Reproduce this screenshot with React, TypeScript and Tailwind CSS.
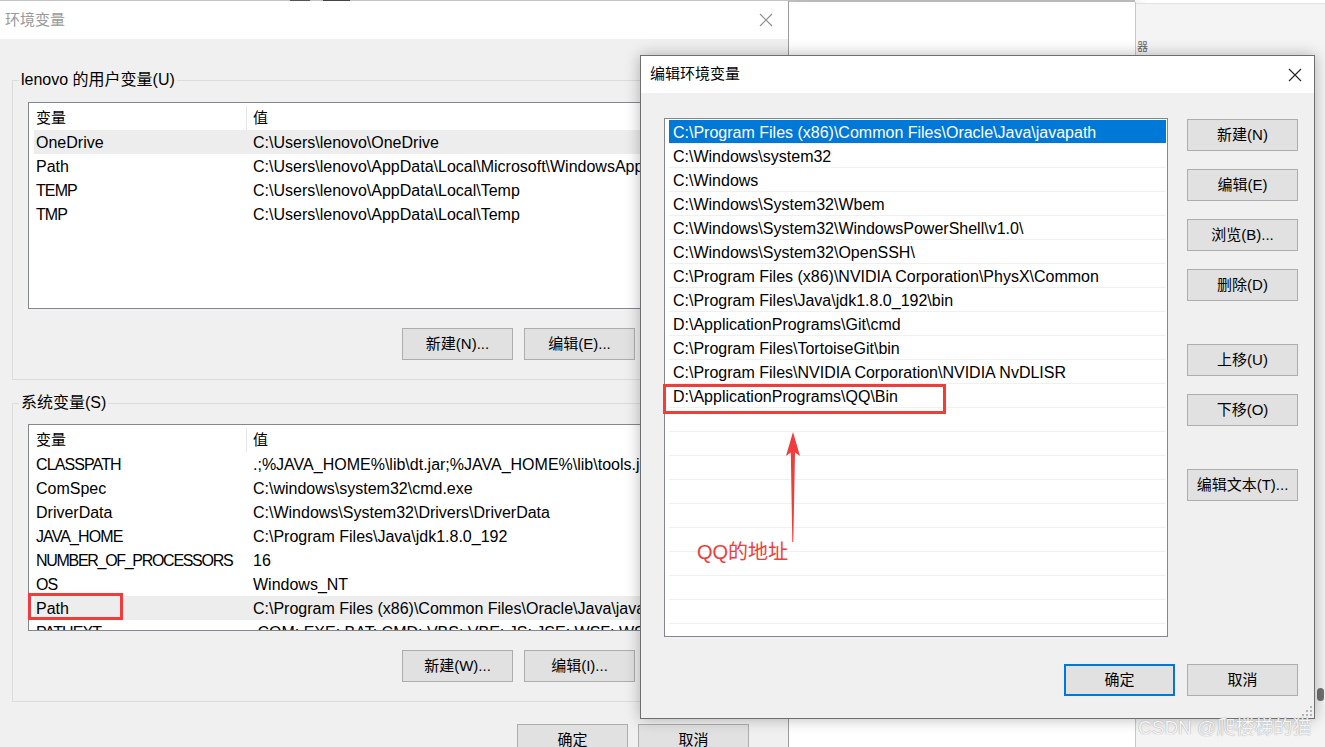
import React from "react";

const userVars: [string, string][] = [
  ["OneDrive", "C:\\Users\\lenovo\\OneDrive"],
  ["Path", "C:\\Users\\lenovo\\AppData\\Local\\Microsoft\\WindowsApps;"],
  ["TEMP", "C:\\Users\\lenovo\\AppData\\Local\\Temp"],
  ["TMP", "C:\\Users\\lenovo\\AppData\\Local\\Temp"],
];

const sysVars: [string, string][] = [
  ["CLASSPATH", ".;%JAVA_HOME%\\lib\\dt.jar;%JAVA_HOME%\\lib\\tools.jar;"],
  ["ComSpec", "C:\\windows\\system32\\cmd.exe"],
  ["DriverData", "C:\\Windows\\System32\\Drivers\\DriverData"],
  ["JAVA_HOME", "C:\\Program Files\\Java\\jdk1.8.0_192"],
  ["NUMBER_OF_PROCESSORS", "16"],
  ["OS", "Windows_NT"],
  ["Path", "C:\\Program Files (x86)\\Common Files\\Oracle\\Java\\javapath;"],
  ["PATHEXT", ".COM;.EXE;.BAT;.CMD;.VBS;.VBE;.JS;.JSE;.WSF;.WSH;.MSC"],
];

const paths = [
  "C:\\Program Files (x86)\\Common Files\\Oracle\\Java\\javapath",
  "C:\\Windows\\system32",
  "C:\\Windows",
  "C:\\Windows\\System32\\Wbem",
  "C:\\Windows\\System32\\WindowsPowerShell\\v1.0\\",
  "C:\\Windows\\System32\\OpenSSH\\",
  "C:\\Program Files (x86)\\NVIDIA Corporation\\PhysX\\Common",
  "C:\\Program Files\\Java\\jdk1.8.0_192\\bin",
  "D:\\ApplicationPrograms\\Git\\cmd",
  "C:\\Program Files\\TortoiseGit\\bin",
  "C:\\Program Files\\NVIDIA Corporation\\NVIDIA NvDLISR",
  "D:\\ApplicationPrograms\\QQ\\Bin",
  "", "", "", "", "", "", "", "", "", "",
];

function Btn({ children, focus }: { children: React.ReactNode; focus?: boolean }) {
  return (
    <div
      className={
        focus
          ? "w-[111px] h-[32px] shrink-0 flex items-center justify-center bg-[#e1e1e1] border-2 border-[#0078d7] text-[15px] leading-[20px] text-black"
          : "w-[111px] h-[32px] shrink-0 flex items-center justify-center bg-[#e1e1e1] border border-[#adadad] text-[15px] leading-[20px] text-black"
      }
    >
      {children}
    </div>
  );
}

function CloseX({ color }: { color: string }) {
  return (
    <svg width="14" height="14" viewBox="0 0 14 14">
      <path d="M1 1 L13 13 M13 1 L1 13" stroke={color} strokeWidth="1.1" fill="none" />
    </svg>
  );
}

function keyClass(k: string) {
  if (k === "NUMBER_OF_PROCESSORS") return "w-[219px] pl-[2px] shrink-0 tracking-[-1.3px]";
  if (k === k.toUpperCase()) return "w-[219px] pl-[2px] shrink-0 tracking-[-0.9px]";
  return "w-[219px] pl-[2px] shrink-0";
}

function VarList({ rows, selected }: { rows: [string, string][]; selected: number }) {
  return (
    <div className="ml-[15px] mr-[15px] h-[207px] bg-white border border-[#828790] overflow-hidden pl-[5px] pt-[1px]">
      <div className="flex h-[26px] pt-[2px] items-center text-[15px] text-black">
        <div className="w-[212px] pl-[2px]">变量</div>
        <div className="w-[1px] h-[24px] bg-[#e5e5e5]" />
        <div className="pl-[6px]">值</div>
      </div>
      {rows.map(([k, v], i) => (
        <div
          key={i}
          className={
            i === selected
              ? "flex h-[24px] pt-[2px] items-center text-[16px] leading-[22px] whitespace-nowrap bg-[#ededed] text-black"
              : "flex h-[24px] pt-[2px] items-center text-[16px] leading-[22px] whitespace-nowrap text-black"
          }
        >
          <div className={keyClass(k)}>{k}</div>
          <div className="shrink-0">{v}</div>
        </div>
      ))}
    </div>
  );
}

function Group({
  label,
  rows,
  selected,
  btns,
  listTop,
}: {
  label: string;
  rows: [string, string][];
  selected: number;
  btns: string[];
  listTop: string;
}) {
  return (
    <fieldset className="border border-[#dcdcdc] pb-[19px]">
      <legend className="ml-[6px] px-[2px] text-[16px] leading-[22px] text-black">{label}</legend>
      <div className={listTop}>
        <VarList rows={rows} selected={selected} />
      </div>
      <div className="flex justify-end gap-[11px] pr-[18px] mt-[19px]">
        {btns.map((b) => (
          <Btn key={b}>{b}</Btn>
        ))}
      </div>
    </fieldset>
  );
}

export default function App() {
  return (
    <div className="relative w-[1325px] h-[747px] overflow-hidden bg-white font-['Liberation_Sans','Noto_Sans_CJK_SC',sans-serif]">
      {/* top strip of the window above */}
      <div className="absolute left-0 top-0 w-[1135px] h-[2px] bg-[#c4c4c4]">
        <div className="absolute left-[290px] top-0 w-[20px] h-[2px] bg-[#555]" />
        <div className="absolute left-[323px] top-0 w-[27px] h-[2px] bg-[#444]" />
      </div>

      {/* background window behind */}
      <div className="absolute left-[788px] top-[2px] w-[348px] h-[760px] bg-white border-r border-[#c8c8c8] shadow-[4px_0_10px_rgba(0,0,0,0.12)]" />
      <div className="absolute left-[1136px] top-[3px] right-0 bottom-0 bg-[#f4f4f4] border-t border-[#e2e2e2]">
        <div className="pl-[1px] pt-[37px] text-[11px] leading-[12px] text-[#666]">器</div>
      </div>
      <div className="absolute left-[1317px] top-[688px] w-[7px] h-[13px] rounded-[4px] bg-[#707070]" />

      {/* left dialog: 环境变量 */}
      <div className="absolute left-0 top-[1px] w-[789px] h-[770px] bg-[#f0f0f0] border-r border-[#9c9c9c] flex flex-col">
        <div className="h-[38px] bg-white flex items-center justify-between pl-[5px] pr-[15px]">
          <span className="text-[15px] text-[#9a9a9a]">环境变量</span>
          <CloseX color="#8c8c8c" />
        </div>
        <div className="flex flex-col px-[12px] pt-[30px]">
          <Group
            label="lenovo 的用户变量(U)"
            rows={userVars}
            selected={0}
            btns={["新建(N)...", "编辑(E)...", "删除(D)"]}
            listTop="mt-[11px]"
          />
          <div className="h-[12px]" />
          <Group
            label="系统变量(S)"
            rows={sysVars}
            selected={6}
            btns={["新建(W)...", "编辑(I)...", "删除(L)"]}
            listTop="mt-[10px]"
          />
          <div className="flex justify-end gap-[10px] pr-[27px] mt-[22px]">
            <Btn>确定</Btn>
            <Btn>取消</Btn>
          </div>
        </div>
      </div>

      {/* right dialog: 编辑环境变量 */}
      <div className="absolute left-[640px] top-[55px] w-[675px] h-[664px] bg-[#f0f0f0] border border-[#6e6e6e] shadow-[0_0_14px_rgba(0,0,0,0.28)] flex flex-col">
        <div className="h-[37px] bg-white flex items-center justify-between pl-[9px] pr-[12px]">
          <span className="text-[15px] text-black">编辑环境变量</span>
          <CloseX color="#222" />
        </div>
        <div className="flex pl-[23px] pr-[16px] pt-[25px]">
          <div className="w-[504px] h-[519px] bg-white border border-[#828790] overflow-hidden pl-[4px] pr-[1px] pt-[1px]">
            {paths.map((p, i) => (
              <div
                key={i}
                className={
                  i === 0
                    ? "h-[24px] pt-[2px] border-b border-[#f0f0f0] bg-[#0078d7] text-white text-[16px] leading-[21px] pl-[4px] whitespace-nowrap"
                    : "h-[24px] pt-[2px] border-b border-[#f0f0f0] text-black text-[16px] leading-[21px] pl-[4px] whitespace-nowrap"
                }
              >
                {p}
              </div>
            ))}
          </div>
          <div className="ml-[19px] pt-[1px] flex flex-col">
            <Btn>新建(N)</Btn>
            <div className="h-[18px]" />
            <Btn>编辑(E)</Btn>
            <div className="h-[18px]" />
            <Btn>浏览(B)...</Btn>
            <div className="h-[18px]" />
            <Btn>删除(D)</Btn>
            <div className="h-[43px]" />
            <Btn>上移(U)</Btn>
            <div className="h-[18px]" />
            <Btn>下移(O)</Btn>
            <div className="h-[43px]" />
            <Btn>编辑文本(T)...</Btn>
          </div>
        </div>
        <div className="flex justify-end gap-[12px] pr-[16px] mt-[27px]">
          <Btn focus>确定</Btn>
          <Btn>取消</Btn>
        </div>
        {/* resize grip */}
        <svg className="absolute right-[1px] bottom-[1px]" width="11" height="11" viewBox="0 0 11 11">
          <g fill="#b4b4b4">
            <rect x="8" y="0" width="2" height="2" />
            <rect x="4" y="4" width="2" height="2" />
            <rect x="8" y="4" width="2" height="2" />
            <rect x="0" y="8" width="2" height="2" />
            <rect x="4" y="8" width="2" height="2" />
            <rect x="8" y="8" width="2" height="2" />
          </g>
        </svg>
      </div>

      {/* annotations */}
      <div className="absolute left-[28px] top-[593px] w-[95px] h-[27px] border-[3px] border-[#f03c3c]" />
      <div className="absolute left-[663px] top-[384px] w-[283px] h-[30px] border-[3px] border-[#f03c3c]" />
      <svg className="absolute left-[780px] top-[428px]" width="26" height="120" viewBox="780 428 26 120">
        <polygon
          points="793,432 800,456 795,452.5 793.3,542 792.3,542 790.8,452.5 786,456"
          fill="#f03c3c"
        />
      </svg>
      <div className="absolute left-[697px] top-[539px] text-[20px] leading-[26px] text-[#f03c3c] whitespace-nowrap">
        QQ的地址
      </div>

      {/* watermark */}
      <div className="absolute left-[1138px] top-[716px] text-[19px] leading-[24px] text-[#f4f4f4] whitespace-nowrap [text-shadow:0_0_1px_#888]">
        CSDN @爬楼梯的猫
      </div>
    </div>
  );
}
